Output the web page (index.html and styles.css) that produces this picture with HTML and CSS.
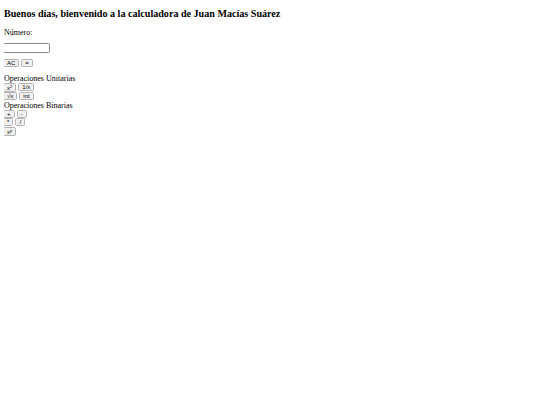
FILE: index.html
```html
<!DOCTYPE html>
<html lang="es">
<head>
<meta charset="utf-8">
<title>Calculadora</title>
<link rel="stylesheet" href="styles.css">
</head>
<body>
<h1 class="title">Buenos días, bienvenido a la calculadora de Juan Macías Suárez</h1>
<p class="label">Número:</p>
<input class="num" type="text">
<div class="controls">
  <button class="btn">AC</button>
  <button class="btn btn-eq">=</button>
</div>
<div class="section section-first">Operaciones Unitarias</div>
<div class="row row-u"><button class="btn btn-tall">x<sup>2</sup></button><button class="btn">1/x</button></div>
<div class="row row-u"><button class="btn">√x</button><button class="btn">int</button></div>
<div class="section">Operaciones Binarias</div>
<div class="row row-b"><button class="btn btn-eq">+</button><button class="btn btn-eq">-</button></div>
<div class="row row-b"><button class="btn btn-eq">*</button><button class="btn btn-eq">/</button></div>
<div class="row row-last"><button class="btn btn-tall">x<sup>y</sup></button></div>
</body>
</html>
```
FILE: styles.css
```css
html, body {
  background: #ffffff;
}
body {
  margin: 4px;
  font-family: "Liberation Serif", "Times New Roman", serif;
  font-size: 8px;
  color: #000;
}
.title {
  font-size: 10.1px;
  font-weight: bold;
  margin: 4px 0 0;
  line-height: 12px;
}
.label {
  margin: 8px 0 0;
  line-height: 9px;
}
.num {
  display: block;
  margin: 6px 0 0 -1px;
  width: 47px;
  height: 10px;
  box-sizing: border-box;
  border: 1px solid #8a8a8a;
  border-radius: 1.5px;
  padding: 0;
  background: #fff;
}
.controls {
  display: flex;
  gap: 2px;
  margin-top: 6px;
  margin-left: -1px;
}
.section {
  line-height: 9px;
  height: 9px;
}
.section-first {
  margin-top: 7px;
}
.row {
  display: flex;
  gap: 2px;
  align-items: flex-start;
  margin-left: -1px;
}
.row-u {
  height: 9px;
}
.row-b {
  height: 8px;
}
.row-last {
  height: 10px;
  margin-top: 1px;
}
.btn {
  font-family: "Liberation Sans", Arial, sans-serif;
  font-size: 6px;
  line-height: 6px;
  height: 8px;
  box-sizing: border-box;
  padding: 0 3px;
  border: 1px solid #b3b3b3;
  border-radius: 1.5px;
  background: #efefef;
  color: #000;
  text-align: center;
}
.btn-eq {
  min-width: 10px;
}
.btn-tall {
  height: 9px;
  line-height: 7px;
  padding-top: 1px;
}
.btn sup {
  font-size: 4.2px;
  line-height: 0;
  vertical-align: 2px;
}
```
